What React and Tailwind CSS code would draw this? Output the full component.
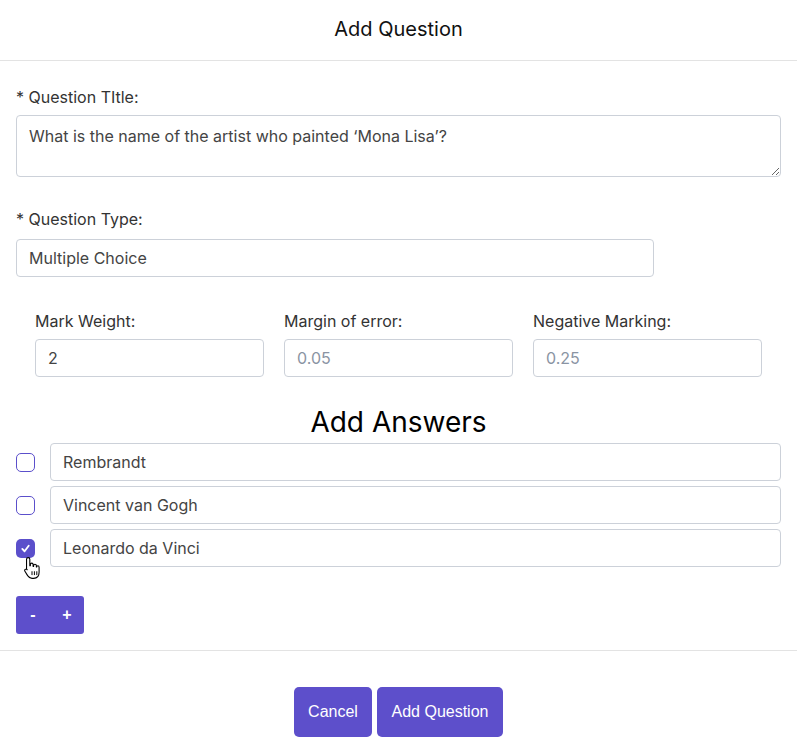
import React from "react";

function Check({ checked }) {
  return checked ? (
    <div className="w-[19px] h-[19px] rounded-[5px] bg-[#5b4fcb] flex items-center justify-center shrink-0">
      <svg width="11" height="11" viewBox="0 0 12 12">
        <path d="M2.5 6.5 L5 9 L9.5 3" fill="none" stroke="white" strokeWidth="2" strokeLinecap="round" strokeLinejoin="round" />
      </svg>
    </div>
  ) : (
    <div className="w-[19px] h-[19px] rounded-[5px] border border-[#5b4fcb] bg-white shrink-0" />
  );
}

function HandCursor() {
  return (
    <svg width="18" height="24" viewBox="0 0 16 22" className="absolute left-[7px] top-[27px]">
      <path
        d="M4.5 1.5 C5.3 1.5 6 2.1 6 3 L6 9 L6.5 9 L6.5 7.8 C6.5 7 7.1 6.5 7.8 6.5 C8.5 6.5 9 7 9 7.8 L9 9.5 L9.5 9.5 L9.5 8.8 C9.5 8.1 10 7.6 10.7 7.6 C11.4 7.6 12 8.1 12 8.8 L12 10 L12.3 10 C12.3 9.4 12.8 9 13.4 9 C14 9 14.5 9.5 14.5 10.2 L14.5 15 C14.5 18 12.8 20.5 9.5 20.5 L8 20.5 C6 20.5 5 19.5 4 18 L1.5 14 C1 13.2 1.3 12.4 2 12.1 C2.6 11.8 3.2 12 3.6 12.6 L3 12 L3 3 C3 2.1 3.7 1.5 4.5 1.5 Z"
        fill="white"
        stroke="black"
        strokeWidth="1"
        strokeLinejoin="round"
      />
      <path d="M8 14 L8 17.5 M10.2 14 L10.2 17.5 M12.4 14 L12.4 17.5" stroke="black" strokeWidth="0.9" />
    </svg>
  );
}

export default function App() {
  const inter = { fontFamily: "Inter, 'Noto Sans', sans-serif" };
  const answers = [
    { text: "Rembrandt", checked: false },
    { text: "Vincent van Gogh", checked: false },
    { text: "Leonardo da Vinci", checked: true },
  ];
  return (
    <div className="w-[797px] h-[750px] bg-white text-[#333] overflow-hidden" style={inter}>
      <div className="h-[61px] border-b border-[#e3e3e3] flex items-center justify-center">
        <h1 className="text-[20px] text-[#111] font-normal mt-[-3px]">Add Question</h1>
      </div>

      <div className="px-4 pt-[25px]">
        <label className="block text-[16px] text-[#333] leading-[22px]">* Question TItle:</label>
        <textarea
          className="mt-[7px] block w-full h-[62px] border border-[#ccd1d9] rounded-[4px] px-3 py-[9px] text-[16px] text-[#444] leading-[22px] outline-none"
          style={inter}
          defaultValue="What is the name of the artist who painted ‘Mona Lisa’?"
        />

        <label className="block mt-[31px] text-[16px] text-[#333] leading-[22px]">* Question Type:</label>
        <div className="mt-[9px] w-[638px] h-[38px] border border-[#ccd1d9] rounded-[4px] px-3 flex items-center text-[16px] text-[#444]">
          Multiple Choice
        </div>
      </div>

      <div className="px-[35px] mt-[33px] grid grid-cols-3 gap-x-5">
        {[
          { label: "Mark Weight:", value: "2", dim: false },
          { label: "Margin of error:", value: "0.05", dim: true },
          { label: "Negative Marking:", value: "0.25", dim: true },
        ].map((f) => (
          <div key={f.label}>
            <div className="text-[16px] text-[#333] leading-[22px]">{f.label}</div>
            <div
              className={
                "mt-[7px] h-[38px] border border-[#ccd1d9] rounded-[4px] px-3 flex items-center text-[16px] " +
                (f.dim ? "text-[#8a94a3]" : "text-[#444]")
              }
            >
              {f.value}
            </div>
          </div>
        ))}
      </div>

      <div className="text-center text-[28px] text-black leading-[34px] mt-[28px]">Add Answers</div>

      <div className="px-4 flex flex-col gap-[5px] mt-[4px]">
        {answers.map((a) => (
          <div key={a.text} className="relative flex items-center gap-[15px]">
            <Check checked={a.checked} />
            <div className="flex-1 h-[38px] border border-[#ccd1d9] rounded-[4px] px-3 flex items-center text-[16px] text-[#444]">
              {a.text}
            </div>
            {a.checked && <HandCursor />}
          </div>
        ))}
      </div>

      <div className="px-4 mt-[29px]">
        <div
          className="inline-flex h-[38px] w-[68px] bg-[#5d4fcb] rounded-[3px] text-white text-[16px] font-bold"
          style={{ fontFamily: "'Liberation Sans', Arial, sans-serif" }}
        >
          <span className="flex-1 flex items-center justify-center">-</span>
          <span className="flex-1 flex items-center justify-center">+</span>
        </div>
      </div>

      <div className="mt-[16px] border-t border-[#e3e3e3]" />

      <div className="flex justify-center gap-[5px] mt-[36px]" style={{ fontFamily: "'Liberation Sans', Arial, sans-serif" }}>
        <button className="h-[50px] w-[78px] bg-[#5d4fcb] rounded-[5px] text-white text-[16px]">Cancel</button>
        <button className="h-[50px] w-[126px] bg-[#5d4fcb] rounded-[5px] text-white text-[16px]">Add Question</button>
      </div>
    </div>
  );
}
